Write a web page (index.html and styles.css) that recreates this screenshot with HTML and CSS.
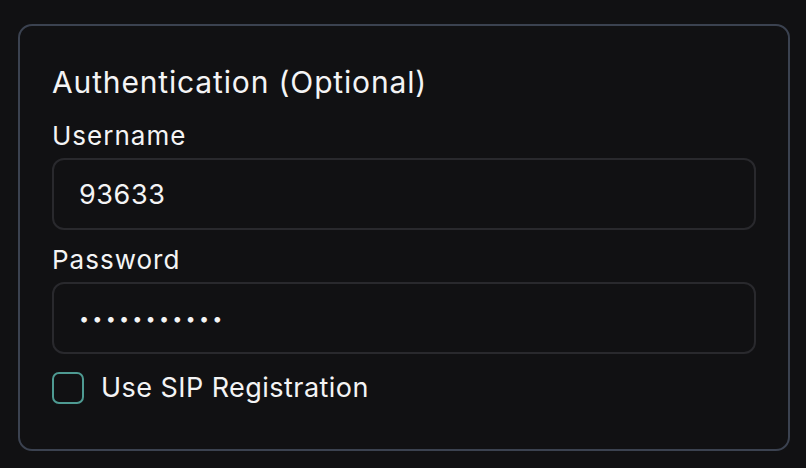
FILE: index.html
```html
<!DOCTYPE html>
<html>
<head>
<meta charset="utf-8">
<link rel="stylesheet" href="styles.css">
</head>
<body>
<div class="card">
  <h2 class="title">Authentication (Optional)</h2>
  <div class="field">
    <label class="label">Username</label>
    <div class="input">93633</div>
  </div>
  <div class="field">
    <label class="label">Password</label>
    <div class="input dots">•••••••••••</div>
  </div>
  <div class="check-row">
    <span class="checkbox"></span>
    <span class="check-label">Use SIP Registration</span>
  </div>
</div>
</body>
</html>
```
FILE: styles.css
```css
html, body {
  margin: 0;
  padding: 0;
  background: #111113;
}
body {
  padding: 24px 16px 17px 18px;
  font-family: Inter, "Noto Sans", sans-serif;
  color: #f4f4f5;
}
.card {
  box-sizing: border-box;
  width: 772px;
  height: 427px;
  border: 2px solid #3b4250;
  border-radius: 14px;
  padding: 36px 32px 0 32px;
  display: flex;
  flex-direction: column;
}
.title {
  margin: 0;
  font-size: 30px;
  font-weight: 400;
  line-height: 40px;
  letter-spacing: 0.85px;
}
.field {
  display: flex;
  flex-direction: column;
  margin-top: 18px;
}
.field + .field {
  margin-top: 14px;
}
.label {
  font-size: 26px;
  font-weight: 400;
  line-height: 32px;
  margin-bottom: 6px;
  letter-spacing: 1px;
}
.input {
  box-sizing: border-box;
  height: 72px;
  border: 2px solid #29292d;
  border-radius: 12px;
  padding: 0 25px;
  display: flex;
  align-items: center;
  font-size: 27px;
  letter-spacing: 0.6px;
  color: #f4f4f5;
}
.dots {
  font-size: 18px;
  letter-spacing: 3.2px;
}
.check-row {
  display: flex;
  align-items: center;
  margin-top: 16px;
  gap: 17px;
}
.checkbox {
  box-sizing: border-box;
  width: 32px;
  height: 32px;
  border: 2px solid #4e9a92;
  border-radius: 7px;
}
.check-label {
  font-size: 27px;
  font-weight: 400;
  line-height: 36px;
  letter-spacing: 0.45px;
}
```
